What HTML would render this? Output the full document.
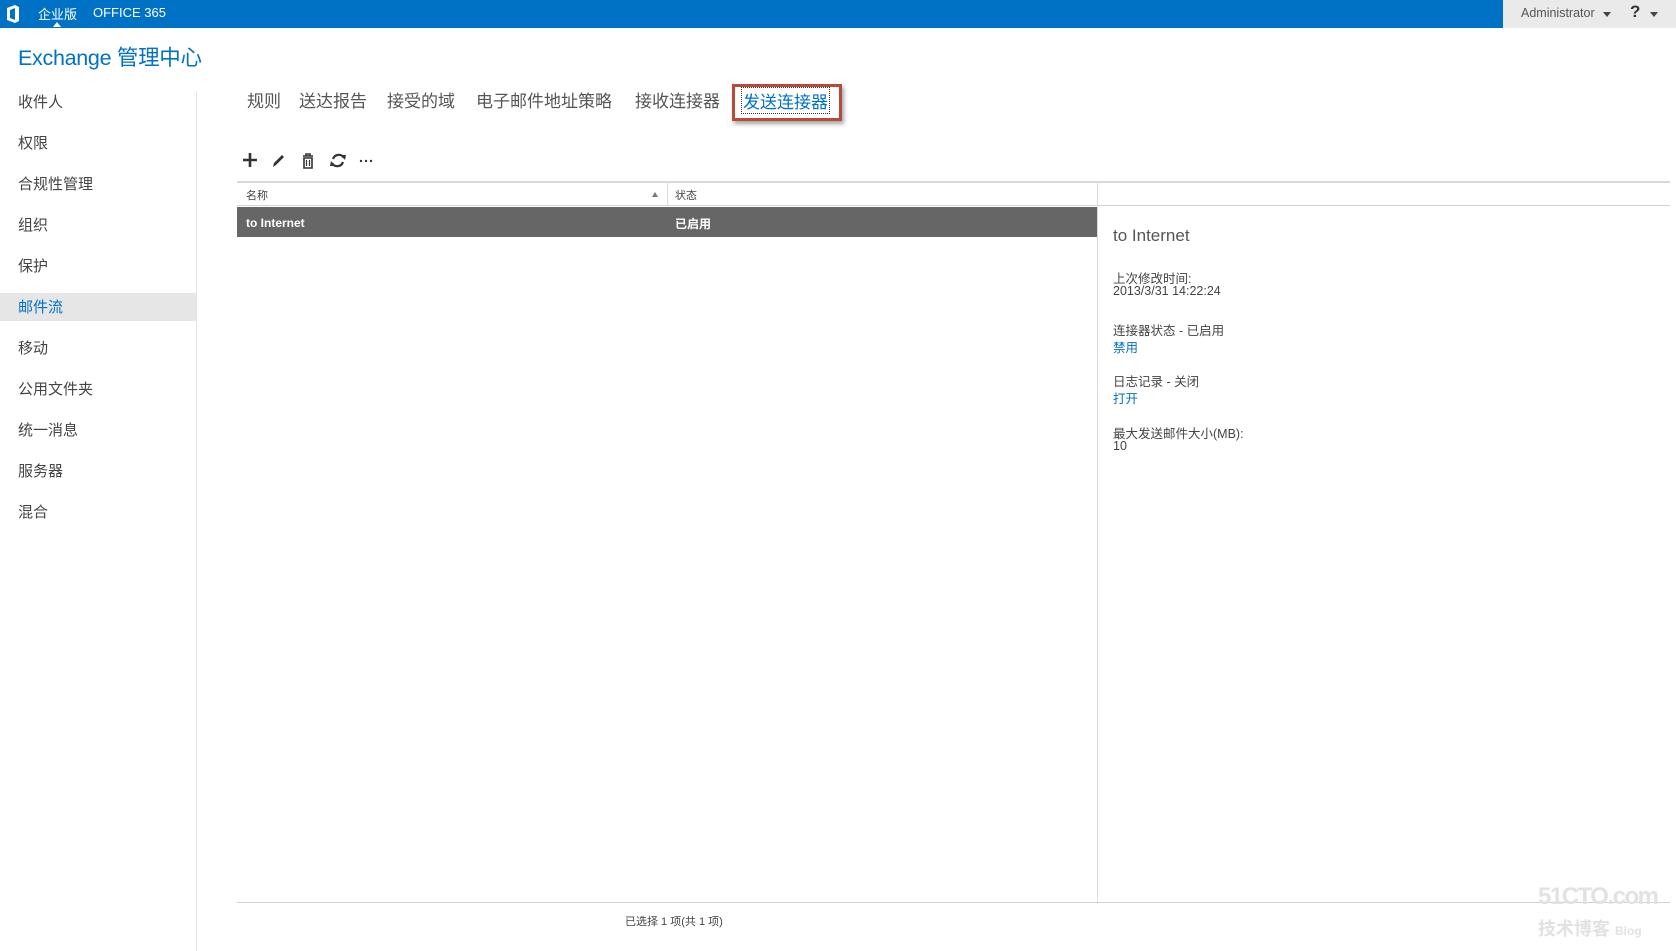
<!DOCTYPE html>
<html><head><meta charset="utf-8"><style>
*{margin:0;padding:0;box-sizing:border-box}
body{width:1676px;height:951px;background:#fff;position:relative;overflow:hidden;font-family:"Segoe UI","Liberation Sans","Noto Sans CJK SC",sans-serif;color:#333}
.a{position:absolute;white-space:nowrap}
.top{left:0;top:0;width:1676px;height:28px;background:#0072c6}
.adm{left:1503px;top:0;width:173px;height:28px;background:#eaeaea}
.nav{font-size:15px;color:#444;left:18px}
.tab{font-size:17px;color:#555;top:87px}
.lbl{font-size:12.5px;color:#444;left:1113px}
</style></head><body>
<div class="a top"></div>
<div class="a adm"></div>
<svg class="a" style="left:5px;top:5px" width="16" height="18" viewBox="0 0 16 18"><path d="M2 3 L10 0 L14 2 L14 16 L10 18 L2 15 Z M5 5 L5 13 L10 15 L10 3 Z" fill="#fff" fill-rule="evenodd"/></svg>
<div class="a" style="left:38px;top:4px;font-size:13px;color:#fff">企业版</div>
<div class="a" style="left:53px;top:22px;width:0;height:0;border-left:4px solid transparent;border-right:4px solid transparent;border-bottom:5px solid #fff"></div>
<div class="a" style="left:93px;top:5px;font-size:13px;color:#fff">OFFICE 365</div>
<div class="a" style="left:1521px;top:6px;font-size:12.5px;color:#555">Administrator</div>
<div class="a" style="left:1603px;top:12px;border-left:4px solid transparent;border-right:4px solid transparent;border-top:5px solid #444"></div>
<div class="a" style="left:1630px;top:2px;font-size:17px;font-weight:bold;color:#333">?</div>
<div class="a" style="left:1650px;top:12px;border-left:4px solid transparent;border-right:4px solid transparent;border-top:5px solid #444"></div>

<div class="a" style="left:18px;top:41px;font-size:21.5px;color:#0072c6;letter-spacing:-0.3px">Exchange 管理中心</div>

<div class="a" style="left:0;top:293px;width:197px;height:28px;background:#e6e6e6"></div>
<div class="a" style="left:196px;top:91px;width:1px;height:860px;background:#e4e4e4"></div>
<div class="a nav" style="top:91px">收件人</div>
<div class="a nav" style="top:132px">权限</div>
<div class="a nav" style="top:173px">合规性管理</div>
<div class="a nav" style="top:214px">组织</div>
<div class="a nav" style="top:255px">保护</div>
<div class="a nav" style="top:296px;color:#0072c6">邮件流</div>
<div class="a nav" style="top:337px">移动</div>
<div class="a nav" style="top:378px">公用文件夹</div>
<div class="a nav" style="top:419px">统一消息</div>
<div class="a nav" style="top:460px">服务器</div>
<div class="a nav" style="top:501px">混合</div>

<div class="a tab" style="left:247px">规则</div>
<div class="a tab" style="left:299px">送达报告</div>
<div class="a tab" style="left:387px">接受的域</div>
<div class="a tab" style="left:476px">电子邮件地址策略</div>
<div class="a tab" style="left:635px">接收连接器</div>
<div class="a" style="left:732px;top:84px;width:110px;height:37px;border:3px solid #b84a3a;box-shadow:2px 3px 4px rgba(0,0,0,.35)"></div>
<div class="a tab" style="left:741px;color:#0072c6;border:1px dotted #333;padding:0 1px;top:87px">发送连接器</div>

<svg class="a" style="left:242px;top:152px" width="140" height="18" viewBox="0 0 140 18">
<path d="M8 1 V15 M1 8 H15" stroke="#333" stroke-width="2.6"/>
<path d="M31 15 L32 11 L40 3 L42 5 L34 13 Z" fill="#333"/>
<path d="M61 4 H71 M64 4 V2 H68 V4 M62 6 H70 V16 H62 Z" stroke="#333" stroke-width="1.6" fill="none"/><path d="M64.5 8 V14 M67.5 8 V14" stroke="#333" stroke-width="1.2"/>
<path d="M102 6 A6 6 0 0 0 91 7 M90 11 A6 6 0 0 0 101 10" stroke="#333" stroke-width="2.2" fill="none"/><path d="M99 3 L104 3 L103 8Z M93 14 L88 14 L89 9Z" fill="#333"/>
<circle cx="119" cy="9" r="1.2" fill="#333"/><circle cx="124" cy="9" r="1.2" fill="#333"/><circle cx="129" cy="9" r="1.2" fill="#333"/>
</svg>

<div class="a" style="left:237px;top:181px;width:1433px;height:2px;background:#d6d9dc"></div>
<div class="a" style="left:237px;top:205px;width:1433px;height:1px;background:#d0d4d8"></div>
<div class="a" style="left:667px;top:183px;width:1px;height:22px;background:#ddd"></div>
<div class="a" style="left:1097px;top:183px;width:1px;height:719px;background:#ddd"></div>
<div class="a" style="left:246px;top:187px;font-size:11px;color:#444">名称</div>
<div class="a" style="left:652px;top:192px;border-left:3px solid transparent;border-right:3px solid transparent;border-bottom:5px solid #777"></div>
<div class="a" style="left:675px;top:187px;font-size:11px;color:#444">状态</div>
<div class="a" style="left:237px;top:207px;width:860px;height:30px;background:#666"></div>
<div class="a" style="left:246px;top:216px;font-size:12px;font-weight:bold;color:#fff">to Internet</div>
<div class="a" style="left:675px;top:215px;font-size:12px;font-weight:bold;color:#fff">已启用</div>

<div class="a" style="left:1113px;top:226px;font-size:17px;color:#555">to Internet</div>
<div class="a lbl" style="top:268px">上次修改时间:</div>
<div class="a lbl" style="top:284px">2013/3/31 14:22:24</div>
<div class="a lbl" style="top:320px">连接器状态 - 已启用</div>
<div class="a lbl" style="top:337px;color:#0072c6">禁用</div>
<div class="a lbl" style="top:371px">日志记录 - 关闭</div>
<div class="a lbl" style="top:388px;color:#0072c6">打开</div>
<div class="a lbl" style="top:423px">最大发送邮件大小(MB):</div>
<div class="a lbl" style="top:439px">10</div>

<div class="a" style="left:237px;top:902px;width:1433px;height:1px;background:#ccd2d6"></div>
<div class="a" style="left:625px;top:913px;font-size:11px;color:#444">已选择 1 项(共 1 项)</div>
<div class="a" style="left:1538px;top:883px;font-size:24px;font-weight:bold;color:#e2e2e2;letter-spacing:-1.5px">51CTO.com</div>
<div class="a" style="left:1538px;top:915px;font-size:18px;font-weight:bold;color:#e2e2e2">技术博客 <span style="font-size:12px">Blog</span></div>
</body></html>
